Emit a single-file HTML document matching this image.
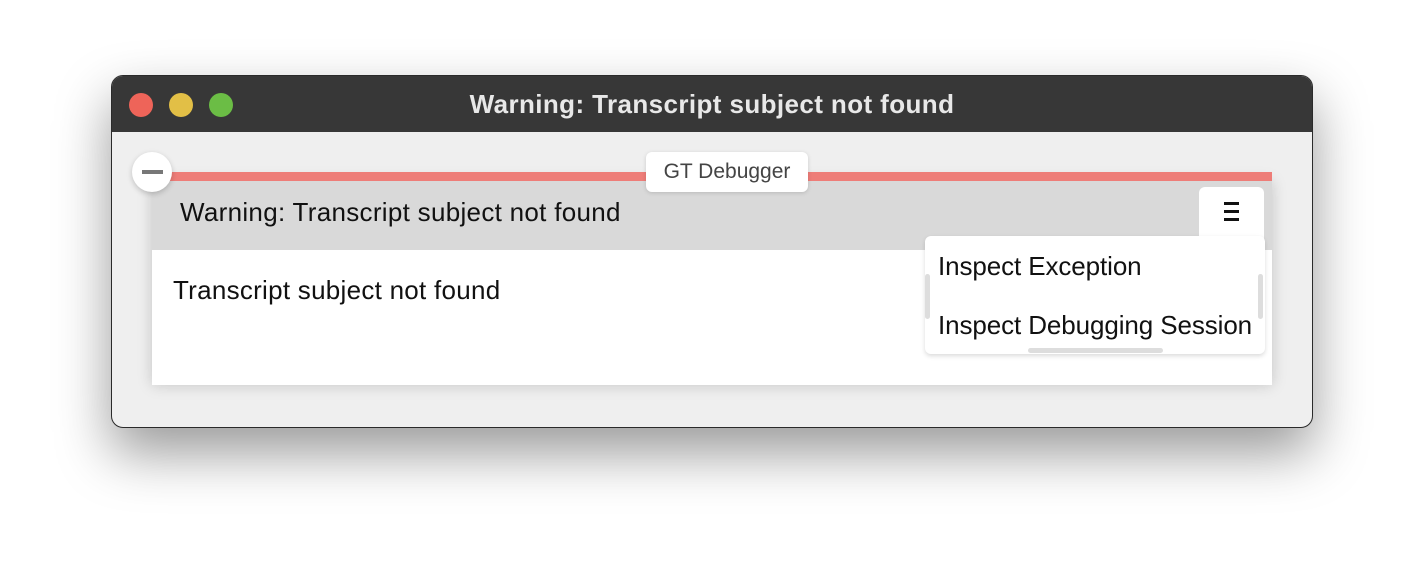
<!DOCTYPE html>
<html><head><style>
body{margin:0;width:1424px;height:574px;background:#fff;position:relative;font-family:"Liberation Sans",sans-serif;overflow:hidden}
.win{position:absolute;left:111px;top:75px;width:1200px;height:351px;border:1px solid #2a2a2a;border-radius:12px;background:#efefef;overflow:hidden;box-shadow:0 25px 55px rgba(0,0,0,.4)}
.tb{position:absolute;left:0;top:0;right:0;height:56px;background:#373737;color:#e8e8e8;font-weight:bold;font-size:26px;letter-spacing:0.4px;text-align:center;line-height:56px}
.dot{position:absolute;top:17px;width:24px;height:24px;border-radius:50%}
.a{position:absolute}
.t{font-size:26px;letter-spacing:-0.1px;color:#111;white-space:nowrap}
</style></head><body>
<div class="win">
<div class="tb">Warning: Transcript subject not found
<div class="dot" style="left:17px;background:#ee6459"></div>
<div class="dot" style="left:57px;background:#e2bf46"></div>
<div class="dot" style="left:97px;background:#6bbd45"></div>
</div>
</div>
<div class="a" style="left:152px;top:181px;width:1120px;height:204px;background:#fff;box-shadow:0 0 14px rgba(0,0,0,.18)"></div>
<div class="a" style="left:152px;top:172px;width:1120px;height:9px;background:#ee7d78"></div>
<div class="a" style="left:152px;top:181px;width:1120px;height:69px;background:#d9d9d9"></div>
<div class="a t" style="left:180px;top:197px;letter-spacing:0.3px">Warning: Transcript subject not found</div>
<div class="a t" style="left:173px;top:275px;letter-spacing:0.27px">Transcript subject not found</div>
<div class="a" style="left:132px;top:152px;width:40px;height:40px;border-radius:50%;background:#fff;box-shadow:0 2px 6px rgba(0,0,0,.2)"><div class="a" style="left:10px;top:18px;width:21px;height:4px;background:#777"></div></div>
<div class="a" style="left:646px;top:152px;width:162px;height:40px;border-radius:6px;background:#fff;box-shadow:0 1px 4px rgba(0,0,0,.15);font-size:21px;color:#444;text-align:center;line-height:40px">GT Debugger</div>
<div class="a" style="left:1199px;top:187px;width:65px;height:60px;border-radius:6px;background:#fff"><div class="a" style="left:25px;top:15px;width:15px;height:3px;background:#111"></div><div class="a" style="left:25px;top:23px;width:15px;height:3px;background:#111"></div><div class="a" style="left:25px;top:31px;width:15px;height:3px;background:#111"></div></div>
<div class="a" style="left:925px;top:236px;width:340px;height:118px;border-radius:6px;background:#fff;box-shadow:0 2px 5px rgba(0,0,0,.15)">
<div class="a t" style="left:13px;top:15px">Inspect Exception</div>
<div class="a t" style="left:13px;top:74px">Inspect Debugging Session</div>
<div class="a" style="left:0;top:38px;width:5px;height:45px;background:#ddd;border-radius:3px"></div>
<div class="a" style="left:333px;top:38px;width:5px;height:45px;background:#ddd;border-radius:3px"></div>
<div class="a" style="left:103px;top:112px;width:135px;height:5px;background:#ddd;border-radius:3px"></div>
</div>
</body></html>
